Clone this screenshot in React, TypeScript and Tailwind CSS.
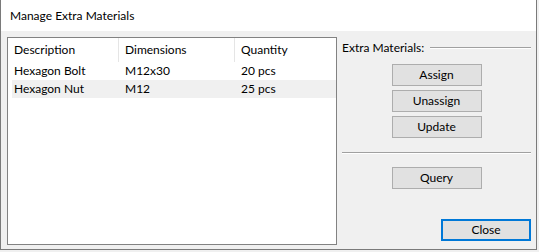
const rows = [
  { desc: "Hexagon Bolt", dim: "M12x30", qty: "20 pcs", selected: false },
  { desc: "Hexagon Nut", dim: "M12", qty: "25 pcs", selected: true },
];

const Btn = ({ label }: { label: string }) => (
  <button className="w-[90px] h-[22px] border border-[#adadad] bg-[#e1e1e1] text-[12px] text-black leading-none">
    {label}
  </button>
);

export default function App() {
  return (
    <div
      className="w-[539px] h-[252px] bg-[#f0f0f0]"
      style={{ fontFamily: 'Lato, "Noto Sans", sans-serif' }}
    >
      <div className="w-[537px] h-[250px] border border-t-0 border-[#7a7a7a] bg-[#f0f0f0] flex flex-col text-[12px] text-black">
        {/* title bar */}
        <div className="h-[31px] bg-white flex items-center pl-[9px] shrink-0">
          Manage Extra Materials
        </div>

        <div className="flex pl-[6px] pt-[6px]">
          {/* list */}
          <div className="w-[330px] h-[208px] border border-[#828282] bg-white">
            <div className="flex h-[24px] items-center">
              <div className="w-[111px] h-full pl-[6px] flex items-center border-r border-[#e5e5e5]">Description</div>
              <div className="w-[116px] h-full pl-[6px] flex items-center border-r border-[#e5e5e5]">Dimensions</div>
              <div className="flex-1 pl-[6px] flex items-center">Quantity</div>
            </div>
            {rows.map((r) => (
              <div
                key={r.desc}
                className={`flex h-[18px] items-center ml-[4px] ${r.selected ? "bg-[#f0f0f0]" : ""}`}
              >
                <div className="w-[107px] pl-[2px]">{r.desc}</div>
                <div className="w-[116px] pl-[6px]">{r.dim}</div>
                <div className="flex-1 pl-[6px]">{r.qty}</div>
              </div>
            ))}
          </div>

          {/* right panel */}
          <div className="w-[189px] ml-[5px] flex flex-col">
            <div className="flex items-center h-[20px] mt-[1px]">
              <span>Extra Materials:</span>
              <div className="flex-1 ml-[6px] border-t border-[#a0a0a0] border-b border-b-white" />
            </div>
            <div className="flex flex-col items-center gap-[4px] mt-[6px]">
              <Btn label="Assign" />
              <Btn label="Unassign" />
              <Btn label="Update" />
            </div>
            <div className="mt-[14px] border-t border-[#a0a0a0] border-b border-b-white" />
            <div className="flex justify-center mt-[13px]">
              <Btn label="Query" />
            </div>
            <div className="flex justify-end mt-[30px]">
              <button className="w-[90px] h-[22px] border-2 border-[#0078d7] bg-[#e1e1e1] text-[12px] text-black leading-none">
                Close
              </button>
            </div>
          </div>
        </div>
      </div>
    </div>
  );
}
